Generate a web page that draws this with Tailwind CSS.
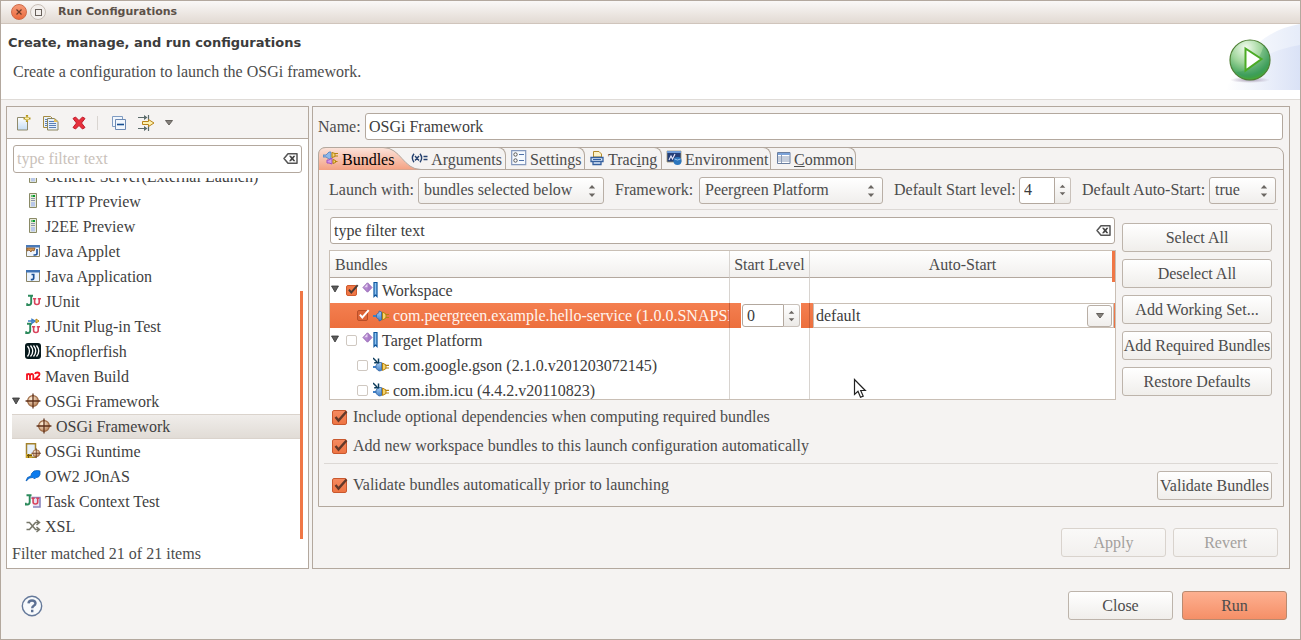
<!DOCTYPE html>
<html lang="en">
<head>
<meta charset="utf-8">
<title>Run Configurations</title>
<script src="https://cdn.jsdelivr.net/npm/@tailwindcss/browser@4"></script>
</head>
<body class="bg-[#f5f3f2]">

<!-- Shared icons -->
<svg class="absolute size-0" aria-hidden="true">
  <defs>
    <linearGradient id="gPage" x1="0" y1="0" x2="0" y2="1"><stop offset="0" stop-color="#fff"/><stop offset="1" stop-color="#c3dcf5"/></linearGradient>
    <linearGradient id="gTab" x1="0" y1="0" x2="0" y2="1"><stop offset="0" stop-color="#fbe3da"/><stop offset="1" stop-color="#f4a182"/></linearGradient>
    <linearGradient id="gWave" x1="0" y1="0" x2="1" y2="0"><stop offset="0" stop-color="#fff"/><stop offset="1" stop-color="#dae2f6"/></linearGradient>
    <linearGradient id="gWave2" x1="0" y1="0" x2="1" y2="0"><stop offset="0" stop-color="#fff"/><stop offset="1" stop-color="#e6ecf9"/></linearGradient>
    <radialGradient id="gRun" cx=".4" cy=".2" r=".85"><stop offset="0" stop-color="#f2fbee"/><stop offset=".45" stop-color="#9fd59b"/><stop offset=".8" stop-color="#45a55c"/><stop offset="1" stop-color="#45a821"/></radialGradient>
    <radialGradient id="gShadow"><stop offset="0" stop-color="#8d7b9a" stop-opacity=".7"/><stop offset="1" stop-color="#8d7b9a" stop-opacity="0"/></radialGradient>
    <radialGradient id="gBall" cx=".35" cy=".3" r=".8"><stop offset="0" stop-color="#fff0dc"/><stop offset="1" stop-color="#b47c50"/></radialGradient>
    <linearGradient id="gBlue" x1="0" y1="0" x2="0" y2="1"><stop offset="0" stop-color="#a8cdf2"/><stop offset="1" stop-color="#3f7fc6"/></linearGradient>
  </defs>
  <symbol id="clear" viewBox="0 0 15 11"><path d="M5 .8h9v9.400h-9L1 5.500z" fill="#fff" stroke="#555" stroke-width="1.500" stroke-linejoin="round"/><path d="M6 2.800h2l1.200 1.500 1.200-1.500h2l-2 2.700 2 2.700h-2L9.200 6.700 8 8.200H6l2-2.700z" fill="#444"/></symbol>
  <symbol id="tri" viewBox="0 0 8 8"><path d="M.5 1h7L4 7z" fill="#5c5c5c" stroke="#333" stroke-width=".8"/></symbol>
  <symbol id="updown" viewBox="0 0 8 12"><path d="M4 0l3.200 3.500H.8zM4 12l3.200-3.500H.8z" fill="#6b6763"/></symbol>
  <symbol id="tick" viewBox="0 0 16 15"><path d="M3.500 7l3 3.600L14.500 1.500" fill="none" stroke="currentColor" stroke-width="2.400"/></symbol>
  <symbol id="server" viewBox="0 0 16 16"><path d="M4.500.5h7v14h-7z" fill="#e8ebdc" stroke="#8a8a66"/><path d="M6 2h4v2H6z" fill="#6fbf7a"/><path d="M8 2h2v2H8z" fill="#079a2c"/><path d="M6 5.500h4M6 7.500h4" stroke="#8b93a8"/><path d="M6 9h4v4.500H6z" fill="#b9c8ea"/></symbol>
  <symbol id="applet" viewBox="0 0 16 16"><path d="M1.500 2.500h13v11h-13z" fill="#eef4fc" stroke="#8a8264"/><path d="M1 2h14v2.500H1z" fill="#4a7ab8"/><path d="M2 5h8l-1 3-2-1-1 2-2-2-2 1z" fill="#d99a50" stroke="#875428" stroke-width=".8"/><path d="M12 6v4.500q0 1.500-2 1.500H8.500" fill="none" stroke="#1d4f96" stroke-width="1.600"/></symbol>
  <symbol id="japp" viewBox="0 0 16 16"><path d="M1.500 2.500h13v11h-13z" fill="#eaf3fd" stroke="#8a8264"/><path d="M1 2h14v2.500H1z" fill="#3e72b4"/><path d="M6.500 6.500h3M8.700 6v4q0 1.600-1.700 1.600H5.800" fill="none" stroke="#1d5296" stroke-width="1.700"/></symbol>
  <symbol id="junit" viewBox="0 0 16 16"><path d="M3 2.800h5M6.200 2.500v7q0 2.500-2.400 2.500H2.200v-1.800" fill="none" stroke="#2c8a5c" stroke-width="1.900"/><path d="M8 5.700h3.200M12.800 5.700H16M9.600 5.500v4q0 2 2.300 2t2.300-2v-4" fill="none" stroke="#d9435c" stroke-width="1.600"/></symbol>
  <symbol id="plug" viewBox="0 0 16 16"><path d="M0 8h5" stroke="#3f7fc6" stroke-width="2"/><path d="M3.500 6.500L6 4.500V3l2.500 1v8L6 13v-1.500L3.500 9.500z" fill="url(#gBlue)" stroke="#3265a5" stroke-width=".8"/><path d="M9.500 4l3.500 2v4l-3.500 2z" fill="#f6d56c" stroke="#b58211"/><path d="M12.500 6.500H16M12.500 9.500H16" stroke="#b58211" stroke-width="1.200"/></symbol>
  <symbol id="plugin" viewBox="0 0 16 16"><g transform="translate(0 1)"><path d="M0 9h4" stroke="#3f7fc6" stroke-width="2"/><path d="M3 7L6 4.500l2.500 0v8L6 13 3 10.500z" fill="url(#gBlue)" stroke="#3265a5" stroke-width=".8"/><path d="M9.500 5l3.500 2v3.500l-3.500 2z" fill="#f6d56c" stroke="#b58211"/><path d="M12.500 7.300H16M12.500 10H16" stroke="#b58211" stroke-width="1.200"/></g><path d="M0 1l4 4M5.500 1.500v4.300H1.200" fill="none" stroke="#0c3c5c" stroke-width="1.500"/></symbol>
  <symbol id="osgi" viewBox="0 0 14 14"><circle cx="7" cy="7" r="4.700" fill="url(#gBall)" stroke="#99653f"/><path d="M7 .5v13M.5 7h13" stroke="#5d2f18" stroke-width="1.100"/></symbol>
  <symbol id="ws" viewBox="0 0 16 16"><path d="M5.500.8L10 5.500l-4.500 4.700L1 5.500z" fill="#a97cc8" stroke="#9a6cb8"/><path d="M5.500 1.500v4H2z" fill="#e6d0f0"/><path d="M5.500 5.500v4L2 5.500z" fill="#b48ad0"/><path d="M12 .5h3v14l-1.500-1.500-1.500 1.500z" fill="#8cc3f2" stroke="#0d559d" stroke-width="1.200"/></symbol>
</svg>

<div class="min-h-screen flex flex-col border border-[#b3a89e] bg-[#f5f3f2] font-['Liberation_Serif',serif] text-[16px] leading-[20px] text-[#4c4c4c]">

  <!-- Title bar -->
  <header class="h-[23px] flex items-center gap-[3px] pl-[10px] border-b border-[#d0c5bc] bg-linear-to-b from-[#faf8f7] to-[#e2dad3]">
    <button aria-label="Close window" class="size-4 rounded-full border border-[#cf6a48] bg-linear-to-b from-[#f69a78] to-[#ea6a3c] flex items-center justify-center">
      <svg class="size-[6px]" viewBox="0 0 6 6"><path d="M.5.5l5 5M5.500.5l-5 5" stroke="#6b3a28" stroke-width="1.200"/></svg>
    </button>
    <button aria-label="Maximize window" class="size-4 rounded-full border border-[#c8bfb7] bg-[#f3efec] flex items-center justify-center">
      <span class="size-[7px] border border-[#69615b]"></span>
    </button>
    <h1 class="ml-[9px] font-['DejaVu_Sans',sans-serif] font-bold text-[11px] leading-4 text-[#5c5149]">Run Configurations</h1>
  </header>

  <!-- Banner -->
  <section class="relative h-[76px] bg-white border-b border-[#dfdbd7] pl-[7px] pt-[10px]">
    <h2 class="font-['DejaVu_Sans',sans-serif] font-bold text-[13px] leading-[18px] text-[#3c3c3c]">Create, manage, and run configurations</h2>
    <p class="pl-[5px] pt-[10px]">Create a configuration to launch the OSGi framework.</p>
    <svg class="absolute right-0 top-0 w-[74px] h-[66px]" viewBox="0 0 74 66">
      <path d="M0 66Q24 8 74 0v66z" fill="url(#gWave2)"/>
      <path d="M0 66Q28 28 74 21v45z" fill="url(#gWave)"/>
      <ellipse cx="24" cy="56" rx="20" ry="3" fill="url(#gShadow)"/>
      <circle cx="24" cy="36" r="20" fill="url(#gRun)" stroke="#4f7f35" stroke-width="1.200"/>
      <path d="M38 21a19 19 0 0 1-28 27q20 0 28-27z" fill="#2f8f58" opacity=".3"/>
      <path d="M19.500 24.500v22l16-11.500z" fill="#fff" stroke="#4cab25" stroke-width="2"/>
    </svg>
  </section>

  <main class="flex-1 flex gap-[3px] pl-[5px] pr-[10px] pt-[6px]">

    <!-- Launch configuration tree -->
    <section class="w-[303px] shrink-0 h-[463px] flex flex-col border border-[#b3a89e] bg-white">
      <div class="h-8 flex items-center bg-[#f5f3f2] border-b border-[#b3a89e] pl-[9px]">
        <button aria-label="New" class="mr-[11px]"><svg class="size-4" viewBox="0 0 16 16"><path d="M1.500 2.500h7l3 4v8.500h-10z" fill="url(#gPage)" stroke="#908b6c"/><path d="M11 0v7M7.500 3.500h7" stroke="#b3951b" stroke-width="2.200"/><path d="M11 1.500v4M9 3.500h4" stroke="#fff3a8"/></svg></button>
        <button aria-label="Duplicate" class="mr-3"><svg class="size-4" viewBox="0 0 16 16"><path d="M.5 1.500h7l2 2v9h-9z" fill="#eaf2fb" stroke="#a58b42"/><path d="M4.500 3.500h7l3.500 3v8.500H4.500z" fill="#e5effb" stroke="#8c865e"/><path d="M2 4.500h2M2 6.500h2M2 8.500h2M2 10.500h2M6 6.500h5M6 8.500h7M6 10.500h7M6 12.500h7" stroke="#5a7fb5"/><path d="M11 3.500v3.500h4z" fill="#e5bf55"/></svg></button>
        <button aria-label="Delete" class="mr-[10px]"><svg class="size-4" viewBox="0 0 16 16"><path d="M2 3.500L4.500 2 8 5.500 11.500 2 14 3.500 10.500 8l3.500 4.500-2.500 1.500L8 10.500 4.500 14 2 12.500 5.500 8z" fill="#e8303c" stroke="#c01b2b" stroke-linejoin="round"/></svg></button>
        <span class="w-px h-[14px] bg-[#d9d5d1] mr-[13px]"></span>
        <button aria-label="Collapse all" class="mr-[11px]"><svg class="size-4" viewBox="0 0 16 16"><path d="M1.500 1.500h10v10h-10z" fill="#f2f7fd" stroke="#809cc2"/><path d="M4.500 4.500h10v10h-10z" fill="#f2f7fd" stroke="#6c89b3"/><path d="M6 9.500h7" stroke="#174e91" stroke-width="1.600"/></svg></button>
        <button aria-label="Filter" class="mr-[10px]"><svg class="w-[17px] h-4" viewBox="0 0 17 16"><path d="M0 2.500h8M0 13.500h8M10.500 0v5M10.500 11v5" fill="none" stroke="#5b6b6b" stroke-width="1.200"/><path d="M6 0l3.500 2.500L6 5zM6 11l3.500 2.500L6 16z" fill="#5b6b6b"/><path d="M4.500 6.500h6v-2l5.500 3.500-5.500 3.500v-2h-6z" fill="#fdf2b0" stroke="#b9841a"/></svg></button>
        <button aria-label="Filter menu"><svg class="size-2" viewBox="0 0 8 8"><path d="M.5 1.500h7L4 6z" fill="#85817c" stroke="#66625e"/></svg></button>
      </div>

      <div class="relative mx-[6px] mt-[6px]">
        <input type="text" aria-label="Filter configurations" placeholder="type filter text" class="block w-full h-[28px] rounded-[3px] border border-[#b3a89e] bg-white px-[3px] placeholder:text-[#c9c1ba]">
        <button aria-label="Clear filter" class="absolute right-1 top-2"><svg class="w-[15px] h-[11px]"><use href="#clear"/></svg></button>
      </div>

      <div class="relative h-[361px] mt-[5px] ml-[5px] mr-[5px] shrink-0">
        <ul class="h-full flex flex-col justify-end overflow-hidden text-[#3f3f3f] [&>li]:h-[25px] [&>li]:shrink-0 [&>li]:flex [&>li]:items-center [&>li]:gap-1 [&>li]:pl-[13px] [&>li]:pt-px [&_svg]:size-4 [&_svg]:-mt-[3px]">
          <li><svg><use href="#server"/></svg>Generic Server(External Launch)</li>
          <li><svg><use href="#server"/></svg>HTTP Preview</li>
          <li><svg><use href="#server"/></svg>J2EE Preview</li>
          <li><svg><use href="#applet"/></svg>Java Applet</li>
          <li><svg><use href="#japp"/></svg>Java Application</li>
          <li><svg><use href="#junit"/></svg>JUnit</li>
          <li><svg viewBox="0 0 16 16"><g transform="translate(-1 3)"><use href="#junit" width="16" height="16"/></g><path d="M3 3h4M7 1.500l3 1.500-3 2z" stroke="#3f7fc6" stroke-width="1.500" fill="#a8cdf2"/><path d="M11 1l3 2-3 2z" fill="#f6d56c" stroke="#b58211"/></svg>JUnit Plug-in Test</li>
          <li><svg viewBox="0 0 16 16"><rect width="16" height="16" rx="3" fill="#07191c"/><path d="M2.500 3q4 5 0 10.500M5.500 2.500q4.500 5.500 0 11M8.500 2.500q4.500 5.500 0 11M11.500 2.500q4.500 5.500 0 11" fill="none" stroke="#fff" stroke-width="1.300"/></svg>Knopflerfish</li>
          <li><svg viewBox="0 0 16 16"><path d="M2 12V5.500M2 8q0-2 1.500-2T5 8v4M5 8q0-2 1.700-2T8.300 8v4M10 6q.3-1.500 2.300-1.500 2.200 0 2.200 1.800 0 1.200-1.500 2.200l-2.800 2.700H15" fill="none" stroke="#f41420" stroke-width="1.800"/></svg>Maven Build</li>
          <li class="relative"><svg class="absolute left-0 top-[11px] !size-2"><use href="#tri"/></svg><svg><use href="#osgi"/></svg>OSGi Framework</li>
          <li class="!pl-[24px] bg-linear-to-b from-[#f0edea] to-[#e1dcd6] border-y border-[#dad3cc]"><svg><use href="#osgi"/></svg>OSGi Framework</li>
          <li><svg viewBox="0 0 16 16"><path d="M1.500.8h9v13.500h-9z" fill="#e5effb" stroke="#a3822c" stroke-width="1.500"/><path d="M1 11h6v4H1z" fill="#c9a227"/><path d="M2 12.500h5M3.500 11v4" stroke="#6e5510"/><g transform="translate(6 5) scale(.75)"><use href="#osgi" width="14" height="14"/></g></svg>OSGi Runtime</li>
          <li><svg viewBox="0 0 16 16"><path d="M1 13l1.500-3.500L6 8l.5-2.500L9 3l3.500-.5L15 3v3.500L13.500 9 11 9.500 9.500 11 8 9.500 4.500 10 3 11.500z" fill="#0b7bee" stroke="#0b5eb8" stroke-width=".8"/></svg>OW2 JOnAS</li>
          <li><svg viewBox="0 0 16 16"><path d="M6.500 4.500h8.500V14H8" fill="#e8e4f4" stroke="#8a86bf" stroke-width="1.600"/><g transform="translate(-1.500 -.5)"><use href="#junit" width="16" height="16"/></g></svg>Task Context Test</li>
          <li><svg viewBox="0 0 16 16"><path d="M1.500 4.500h3l6 7h3M1.500 11.500h3l6-7h3M11.500 2l3 2.500-3 2.500M11.500 9l3 2.500-3 2.500" fill="none" stroke="#77776a" stroke-width="1.500"/></svg>XSL</li>
        </ul>
        <div class="absolute right-0 bottom-0 w-[3px] h-[248px] bg-[#f07746]"></div>
      </div>
      <p class="pl-[5px] pt-[5px]">Filter matched 21 of 21 items</p>
    </section>

    <!-- Configuration editor -->
    <section class="flex-1 min-w-0 h-[463px] flex flex-col border border-[#b3a89e] px-[5px] pt-[6px]">
      <div class="flex items-center gap-2 pr-px">
        <label for="name" class="w-[39px]">Name:</label>
        <input id="name" type="text" value="OSGi Framework" class="flex-1 h-[27px] rounded-[3px] border border-[#b3a89e] bg-white px-[3px] text-[#3c3c3c]">
      </div>

      <div class="mt-[7px] h-[360px] border border-[#b3a89e] rounded-t-[8px] flex flex-col">
        <div role="tablist" class="h-[22px] shrink-0 flex border-b border-[#b3a89e] [&>button]:h-[22px] [&>button]:-mt-px [&>button]:flex [&>button]:items-center [&>button]:pt-[3px]">
          <button role="tab" aria-selected="true" class="relative w-[93px] pl-[4px] text-black">
            <svg class="absolute -left-px top-0 w-[104px] h-[23px]" viewBox="0 0 104 23"><path d="M.5 23V8Q.5.5 8 .5h57c18 0 20 22 38 22z" fill="url(#gTab)"/><path d="M.5 23V8Q.5.5 8 .5h57c18 0 20 22 38 22" fill="none" stroke="#b3a89e"/></svg>
            <svg class="relative size-4 -mt-[3px]" viewBox="0 0 16 16"><path d="M0 5h3l3-3h2v7H6L3 7H0z" fill="#8fb8e8" stroke="#4a7fc0" stroke-width=".8"/><path d="M9 2.500l3 1v3l-3 1zM12 3.500h3M12 6h3" fill="#f6d56c" stroke="#b58211"/><path d="M4 10h2l3-2v6l-3-1H4z" fill="#d39cea" stroke="#9d50c0"/><path d="M10 9.500l2.500 1v2l-2.500 1zM12.500 11.500h2" fill="#f6d56c" stroke="#b58211"/></svg>
            <span class="relative ml-[3px]">Bundles</span>
          </button>
          <button role="tab" class="w-[94px] border-t border-r border-[#b3a89e] rounded-tr-[8px] gap-[3px] justify-end pr-[3px]">
            <svg class="w-[17px] h-[10px] shrink-0 -mt-1" viewBox="0 0 17 10"><path d="M3 .8Q-.3 5 3 9.200M9 .8q3.300 4.200 0 8.400M4 3l4 4.500M8 3L4 7.500M12.500 3.500h4M12.500 6.500h4" fill="none" stroke="#24406e" stroke-width="1.400"/></svg>Arguments</button>
          <button role="tab" class="w-[79px] border-t border-r border-[#b3a89e] rounded-tr-[8px] gap-[3px] pl-[5px]">
            <svg class="size-4 -mt-1 shrink-0" viewBox="0 0 16 16"><path d="M.7.7h14v14H.7z" fill="#f5f9fe" stroke="#8398bd" stroke-width="1.200"/><circle cx="4.500" cy="4.500" r="1.700" fill="#fff" stroke="#555"/><circle cx="4.500" cy="10.500" r="1.700" fill="#fff" stroke="#555"/><path d="M8 4.500h5M8 10.500h5" stroke="#4d70a8" stroke-width="1.200"/></svg>Settings</button>
          <button role="tab" class="w-[77px] border-t border-r border-[#b3a89e] rounded-tr-[8px] gap-1 pl-[5px]">
            <svg class="w-[14px] h-4 -mt-1 shrink-0" viewBox="0 0 14 16"><path d="M3.500 7V1.500H9L11.500 4v3z" fill="#fdf3c8" stroke="#b3892a"/><path d="M1 7.500h12v4H1zM3 11.500v3h8v-3" fill="#dce9f8" stroke="#35609e" stroke-width="1.300"/><path d="M3 9.500h8" stroke="#35609e"/></svg><span>Trac<u>i</u>ng</span></button>
          <button role="tab" class="w-[109px] border-t border-r border-[#b3a89e] rounded-tr-[8px] gap-[3px] pl-[4px]">
            <svg class="size-4 -mt-1 shrink-0" viewBox="0 0 16 16"><path d="M1 1h14v11H1z" fill="#243f78" stroke="#9c9573" stroke-width=".8"/><path d="M1 1h14v2H1z" fill="#6f9cd8"/><path d="M3 10l2-4 1.500 3L9 4" fill="none" stroke="#eef" stroke-width="1.100"/><circle cx="11.500" cy="11" r="4" fill="#2c76bd"/><path d="M8.500 9q3 2 6 0" stroke="#9cc7ee" fill="none"/></svg>Environment</button>
          <button role="tab" class="w-[85px] border-t border-r border-[#b3a89e] rounded-tr-[8px] gap-[3px] pl-[6px]">
            <svg class="w-[14px] h-3 -mt-1 shrink-0" viewBox="0 0 14 12"><path d="M.5.5h12.500v11H.5z" fill="#fff" stroke="#6b7f9f"/><path d="M1 1h12v2H1z" fill="#7ba2d8"/><path d="M1 5h12M1 7h12M1 9h12M4.500 3v8" stroke="#8b9cb8"/></svg><span><u>C</u>ommon</span></button>
        </div>

        <div class="flex-1 flex flex-col pl-[5px] pr-[5px] pt-[7px]">
          <div class="flex items-center justify-between h-[26px] pl-[5px] pr-[2px] [&>div]:flex [&>div]:items-center">
            <div>
              <label for="launch" class="w-[89px]">Launch with:</label>
              <span class="relative"><select id="launch" class="block appearance-none w-[186px] h-[27px] pl-[5px] rounded-[3px] border border-[#b9afa6] bg-linear-to-b from-white to-[#f0eeec]"><option>bundles selected below</option></select><svg class="absolute right-2 top-2 w-2 h-3 pointer-events-none"><use href="#updown"/></svg></span>
            </div>
            <div>
              <label for="fw" class="w-[84px]">Framework:</label>
              <span class="relative"><select id="fw" class="block appearance-none w-[184px] h-[27px] pl-[5px] rounded-[3px] border border-[#b9afa6] bg-linear-to-b from-white to-[#f0eeec]"><option>Peergreen Platform</option></select><svg class="absolute right-2 top-2 w-2 h-3 pointer-events-none"><use href="#updown"/></svg></span>
            </div>
            <div>
              <label for="lvl" class="w-[125px]">Default Start level:</label>
              <span class="relative flex"><input id="lvl" type="text" inputmode="numeric" value="4" class="w-[36px] h-[27px] rounded-l-[3px] border border-[#b3a89e] bg-white pl-1 text-[#3c3c3c]"><span class="w-4 h-[27px] rounded-r-[3px] border border-l-0 border-[#c9c1ba] bg-linear-to-b from-white to-[#eceae7] flex items-center justify-center"><svg class="w-[7px] h-3"><use href="#updown"/></svg></span></span>
            </div>
            <div>
              <label for="auto" class="w-[127px]">Default Auto-Start:</label>
              <span class="relative"><select id="auto" class="block appearance-none w-[67px] h-[27px] pl-[5px] rounded-[3px] border border-[#b9afa6] bg-linear-to-b from-white to-[#f0eeec]"><option>true</option></select><svg class="absolute right-2 top-2 w-2 h-3 pointer-events-none"><use href="#updown"/></svg></span>
            </div>
          </div>
          <hr class="mt-[6px] border-0 border-t border-[#dcd8d5]">

          <div class="flex gap-[6px] mt-[7px] pl-[5px] pr-[6px]">
            <div class="flex-1 min-w-0">
              <div class="relative ml-px mr-px">
                <input type="text" aria-label="Filter bundles" value="type filter text" class="block w-full h-[27px] rounded-[3px] border border-[#b3a89e] bg-white px-[3px] text-[#3c3c3c]">
                <button aria-label="Clear filter" class="absolute right-1 top-2"><svg class="w-[15px] h-[11px]"><use href="#clear"/></svg></button>
              </div>

              <!-- Bundle table -->
              <div class="relative mt-[6px] h-[150px] overflow-hidden border border-[#c9bfb5] bg-white">
                <table class="w-full table-fixed border-separate border-spacing-0 text-[#3c3c3c] [&_td]:h-[25px] [&_td]:p-0 [&_td:not(:last-child)]:border-r [&_td:not(:last-child)]:border-[#d8d4d0] [&_td>div]:h-[25px]">
                  <colgroup><col class="w-[400px]"><col class="w-[80px]"><col></colgroup>
                  <thead>
                    <tr class="text-[#4c4c4c] bg-linear-to-b from-white to-[#f1efed] [&>th]:h-[27px] [&>th]:font-normal [&>th]:border-b [&>th]:border-[#b3a89e] [&>th]:pb-0 [&>th]:pt-[2px]">
                      <th class="text-left px-[5px] border-r !border-r-[#d8d4d0]">Bundles</th>
                      <th class="px-0 border-r !border-r-[#d8d4d0]">Start Level</th>
                      <th class="px-0">Auto-Start</th>
                    </tr>
                  </thead>
                  <tbody>
                    <tr>
                      <td><div class="flex items-center">
                        <svg class="size-2 -mt-1 ml-px"><use href="#tri"/></svg>
                        <span class="relative ml-[7px]"><input type="checkbox" checked aria-label="Workspace" class="block appearance-none size-[11px] rounded-[2px] border border-[#cf5b2e] bg-[#f07746]"><svg class="absolute left-0 -top-px w-[13px] h-3 text-[#4a3a34] pointer-events-none"><use href="#tick"/></svg></span>
                        <svg class="size-4 ml-[5px] -mt-[2px]"><use href="#ws"/></svg><span class="ml-[4px]">Workspace</span></div></td>
                      <td></td><td></td>
                    </tr>
                    <tr class="bg-linear-to-b from-[#f47f50] to-[#ec6f3d]">
                      <td class="!border-[#c75e38]"><div class="flex items-center pl-[27px] text-[#fff4ee] overflow-hidden whitespace-nowrap">
                        <span class="relative"><input type="checkbox" checked aria-label="com.peergreen.example.hello-service" class="block appearance-none size-[11px] rounded-[2px] border border-[#b94e28] bg-[#dd6437]"><svg class="absolute left-0 -top-px w-[13px] h-3 text-white pointer-events-none"><use href="#tick"/></svg></span>
                        <svg class="size-4 ml-[5px] shrink-0"><use href="#plug"/></svg><span class="ml-[4px]">com.peergreen.example.hello-service (1.0.0.SNAPSHOT)</span></div></td>
                      <td class="!border-[#c75e38]"><div class="flex pl-[11px] pr-2"><div class="flex flex-1 bg-white p-px"><input aria-label="Start level" type="text" inputmode="numeric" value="0" class="w-[42px] h-[23px] rounded-l-[3px] border border-[#b3a89e] bg-white pl-1"><span class="flex-1 rounded-r-[3px] border border-l-0 border-[#c9c1ba] bg-linear-to-b from-white to-[#eceae7] flex items-center justify-center"><svg class="w-[7px] h-3"><use href="#updown"/></svg></span></div></div></td>
                      <td><div class="relative pl-[3px] pr-px">
                        <select aria-label="Auto-start" class="block appearance-none w-full h-[25px] border border-[#c9bfb5] bg-white pl-[2px]"><option>default</option></select>
                        <span class="absolute right-[3px] top-[2px] w-[25px] h-[22px] rounded-[3px] border border-[#b9afa6] bg-linear-to-b from-white to-[#f0eeec] flex items-center justify-center pointer-events-none"><svg class="size-2" viewBox="0 0 8 8"><path d="M.5 1.500h7L4 6z" fill="#85817c" stroke="#66625e"/></svg></span></div></td>
                    </tr>
                    <tr>
                      <td><div class="flex items-center">
                        <svg class="size-2 -mt-1 ml-px"><use href="#tri"/></svg>
                        <input type="checkbox" aria-label="Target Platform" class="ml-[7px] block appearance-none size-[11px] rounded-[2px] border border-[#cfc8c1] bg-white">
                        <svg class="size-4 ml-[5px] -mt-[2px]"><use href="#ws"/></svg><span class="ml-[4px]">Target Platform</span></div></td>
                      <td></td><td></td>
                    </tr>
                    <tr>
                      <td><div class="flex items-center pl-[27px]">
                        <input type="checkbox" aria-label="com.google.gson" class="block appearance-none size-[11px] rounded-[2px] border border-[#cfc8c1] bg-white">
                        <svg class="size-4 ml-[5px] -mt-[2px]"><use href="#plugin"/></svg><span class="ml-[4px]">com.google.gson (2.1.0.v201203072145)</span></div></td>
                      <td></td><td></td>
                    </tr>
                    <tr>
                      <td><div class="flex items-center pl-[27px]">
                        <input type="checkbox" aria-label="com.ibm.icu" class="block appearance-none size-[11px] rounded-[2px] border border-[#cfc8c1] bg-white">
                        <svg class="size-4 ml-[5px] -mt-[2px]"><use href="#plugin"/></svg><span class="ml-[4px]">com.ibm.icu (4.4.2.v20110823)</span></div></td>
                      <td></td><td></td>
                    </tr>
                  </tbody>
                </table>
                <div class="absolute right-0 top-0 w-[3px] h-[31px] bg-[#f07746]"></div>
              </div>
            </div>

            <div class="w-[150px] shrink-0 flex flex-col gap-[7px] pt-[6px] [&>button]:h-[29px] [&>button]:pt-px [&>button]:rounded-[3px] [&>button]:border [&>button]:border-[#bdb4ab] [&>button]:bg-linear-to-b [&>button]:from-white [&>button]:to-[#f0eeeb] [&>button]:whitespace-nowrap">
              <button>Select All</button>
              <button>Deselect All</button>
              <button>Add Working Set...</button>
              <button>Add Required Bundles</button>
              <button>Restore Defaults</button>
            </div>
          </div>

          <div class="mt-[7px] pl-[8px] flex flex-col gap-[9px]">
            <label class="flex items-center gap-[6px]"><span class="relative"><input type="checkbox" checked class="block appearance-none size-[15px] rounded-[2px] border border-[#c9582e] bg-linear-to-b from-[#f58a60] to-[#ee7443]"><svg class="absolute left-0 top-0 w-4 h-[15px] text-[#63392a] pointer-events-none"><use href="#tick"/></svg></span>Include optional dependencies when computing required bundles</label>
            <label class="flex items-center gap-[6px]"><span class="relative"><input type="checkbox" checked class="block appearance-none size-[15px] rounded-[2px] border border-[#c9582e] bg-linear-to-b from-[#f58a60] to-[#ee7443]"><svg class="absolute left-0 top-0 w-4 h-[15px] text-[#63392a] pointer-events-none"><use href="#tick"/></svg></span>Add new workspace bundles to this launch configuration automatically</label>
          </div>
          <hr class="mt-[7px] border-0 border-t border-[#dcd8d5]">
          <div class="mt-[7px] pl-[8px] pr-[6px] flex items-start justify-between">
            <label class="flex items-center gap-[6px] pt-1"><span class="relative"><input type="checkbox" checked class="block appearance-none size-[15px] rounded-[2px] border border-[#c9582e] bg-linear-to-b from-[#f58a60] to-[#ee7443]"><svg class="absolute left-0 top-0 w-4 h-[15px] text-[#63392a] pointer-events-none"><use href="#tick"/></svg></span>Validate bundles automatically prior to launching</label>
            <button class="w-[115px] h-[29px] pt-px whitespace-nowrap rounded-[3px] border border-[#bdb4ab] bg-linear-to-b from-white to-[#f0eeeb]">Validate Bundles</button>
          </div>
        </div>
      </div>

      <div class="mt-[21px] pr-[6px] flex justify-end gap-[7px] text-[#a3a09d]">
        <button disabled class="w-[105px] h-[29px] pt-px rounded-[3px] border border-[#d9d3cd] bg-linear-to-b from-[#faf9f8] to-[#f2f0ee]">Apply</button>
        <button disabled class="w-[105px] h-[29px] pt-px rounded-[3px] border border-[#d9d3cd] bg-linear-to-b from-[#faf9f8] to-[#f2f0ee]">Revert</button>
      </div>
    </section>
  </main>

  <footer class="h-[70px] shrink-0 flex items-center pl-[20px] pr-[13px] pt-[3px]">
    <button aria-label="Help"><svg class="size-[22px]" viewBox="0 0 22 22"><circle cx="11" cy="11" r="9.700" fill="#f8fafc" stroke="#65799a" stroke-width="1.400"/><path d="M7.500 8.300Q7.700 5.500 11 5.500t3.500 2.700q0 1.500-1.700 2.500-1.600 1-1.600 2.500M11.200 14.800v2.400" fill="none" stroke="#5d7194" stroke-width="2.400"/></svg></button>
    <div class="ml-auto flex gap-[9px]">
      <button class="w-[105px] h-[29px] pt-px rounded-[3px] border border-[#bdb4ab] bg-linear-to-b from-white to-[#f0eeeb]">Close</button>
      <button class="w-[105px] h-[29px] pt-px rounded-[3px] border border-[#b98a70] bg-linear-to-b from-[#fdb090] to-[#f58f67]">Run</button>
    </div>
  </footer>
</div>

<!-- Mouse pointer -->
<svg class="absolute left-[853px] top-[378px] w-[14px] h-[21px] pointer-events-none" viewBox="0 0 14 21"><path d="M1.500 1.500v15l3.500-3.200 2.500 6 2.700-1.200-2.500-5.600h4.600z" fill="#fff" stroke="#222" stroke-width="1.200"/></svg>
</body>
</html>
